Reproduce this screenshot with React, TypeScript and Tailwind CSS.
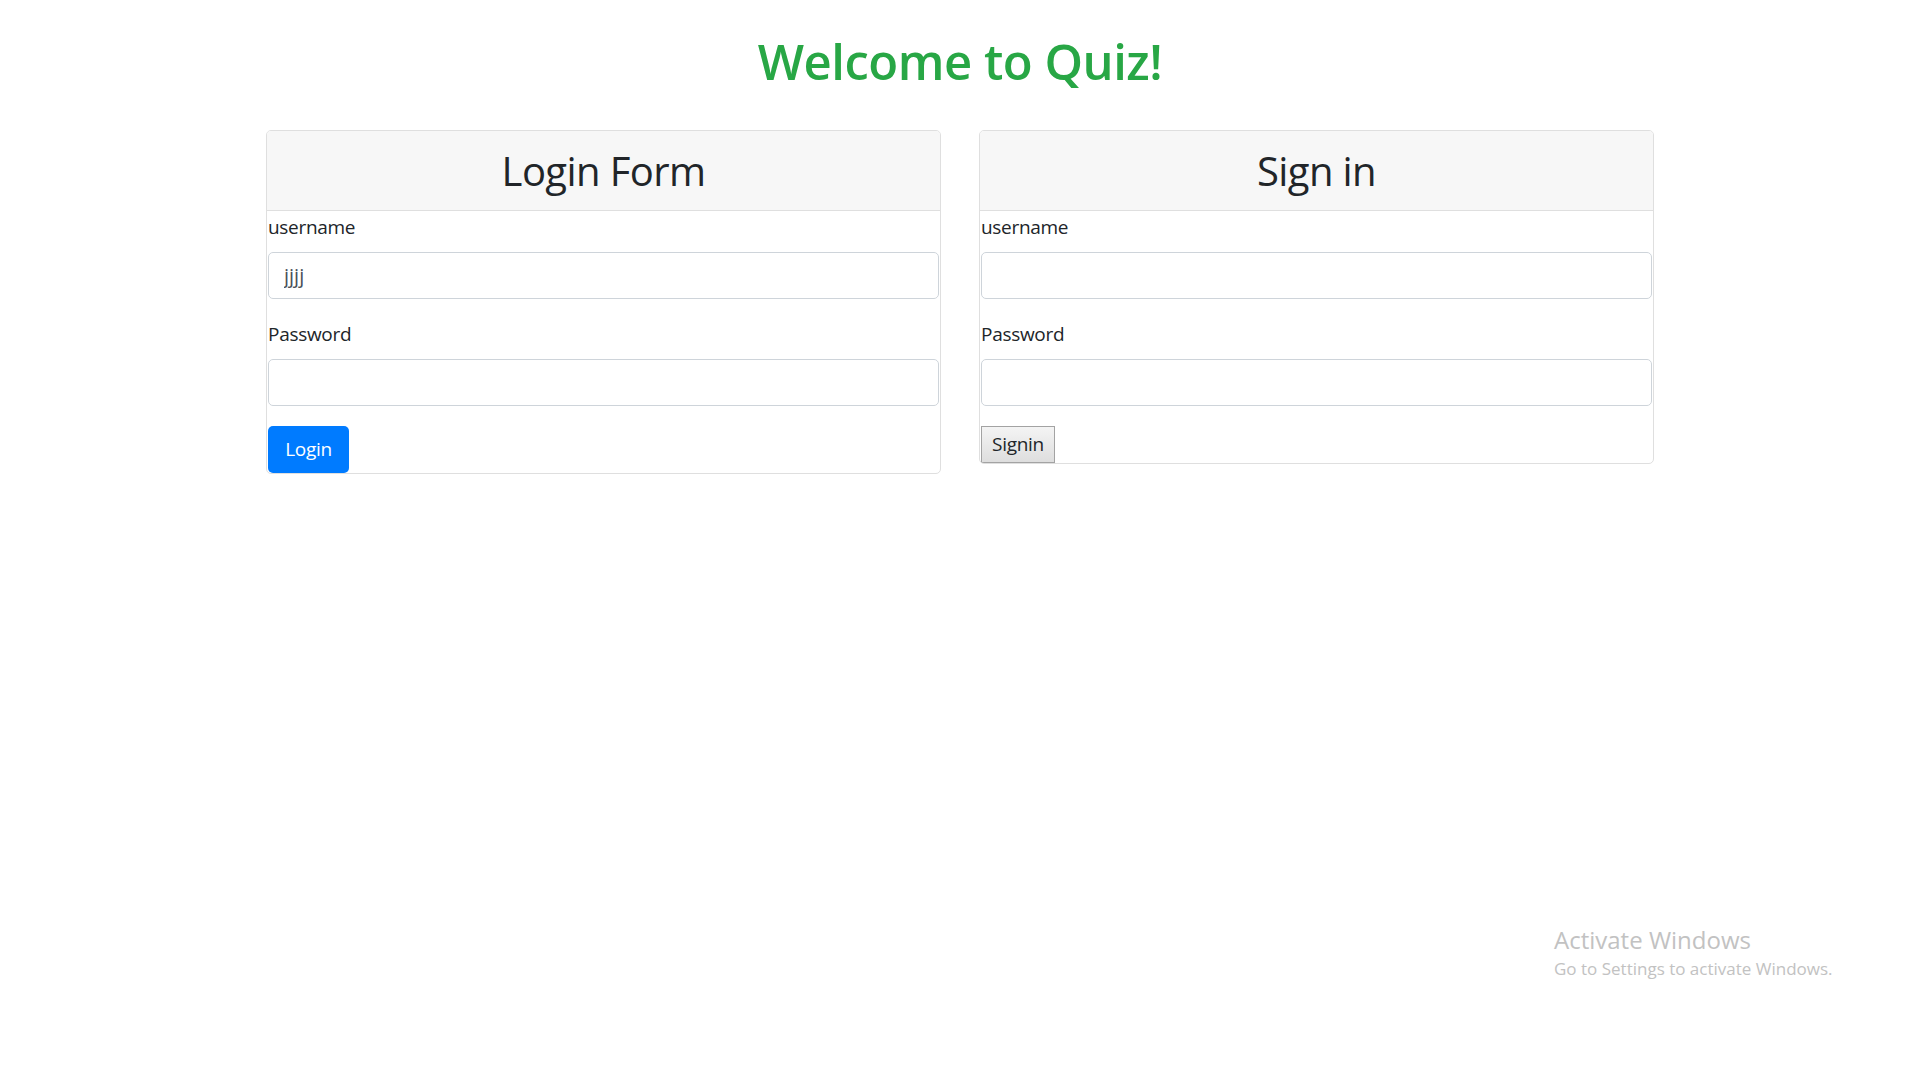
import React, { useState } from 'react';

const font = { fontFamily: '"Open Sans", "Noto Sans", sans-serif' };

const FormCard: React.FC<{
  title: string;
  initialUser?: string;
  button: React.ReactNode;
}> = ({ title, initialUser = '', button }) => {
  const [user, setUser] = useState(initialUser);
  const [pass, setPass] = useState('');

  return (
    <div className="flex flex-col self-start rounded-[5px] border border-[#dfdfdf] overflow-hidden">
      <div className="h-[80px] flex items-center justify-center bg-[#f7f7f7] border-b border-[#dfdfdf]">
        <h2 className="text-[40px] leading-[48px] font-medium text-[#212529] tracking-[-0.6px]">{title}</h2>
      </div>
      <div className="flex flex-col">
        <label className="text-[19px] leading-[30px] mt-[1px] px-[1px] text-[#212529] tracking-[-0.3px]">username</label>
        <input
          value={user}
          onChange={(e) => setUser(e.target.value)}
          className="mt-[10px] mx-[1px] h-[47px] rounded-[5px] border border-[#ced4da] px-[15px] text-[20px] text-[#495057] outline-none"
        />
        <label className="mt-[20px] text-[19px] leading-[30px] px-[1px] text-[#212529] tracking-[-0.3px]">Password</label>
        <input
          type="password"
          value={pass}
          onChange={(e) => setPass(e.target.value)}
          className="mt-[10px] mx-[1px] h-[47px] rounded-[5px] border border-[#ced4da] px-[15px] text-[20px] text-[#495057] outline-none"
        />
        <div className="mt-[20px] px-[1px] flex">{button}</div>
      </div>
    </div>
  );
};

export default function App() {
  return (
    <div className="relative min-h-screen bg-white" style={font}>
      <h1 className="pt-[31px] text-center text-[49px] leading-[60px] font-semibold text-[#28a745] tracking-[-0.5px]">
        Welcome to Quiz!
      </h1>
      <div className="mt-[39px] w-[1388px] mx-auto grid grid-cols-2 gap-[38px]">
        <FormCard
          title="Login Form"
          initialUser="jjjj"
          button={
            <button className="h-[47px] w-[81px] rounded-[5px] bg-[#007bff] text-white text-[19px] tracking-[-0.3px]">
              Login
            </button>
          }
        />
        <FormCard
          title="Sign in"
          button={
            <button className="h-[37px] w-[74px] border border-[#a3a3a3] bg-gradient-to-b from-[#f4f4f4] to-[#dedede] text-[19px] text-[#212529] tracking-[-0.3px]">
              Signin
            </button>
          }
        />
      </div>
      <div className="absolute left-[1554px] top-[925px] text-[#c2c2c2]">
        <div className="text-[24px] leading-[30px]">Activate Windows</div>
        <div className="text-[17px] leading-[28px]">Go to Settings to activate Windows.</div>
      </div>
    </div>
  );
}
